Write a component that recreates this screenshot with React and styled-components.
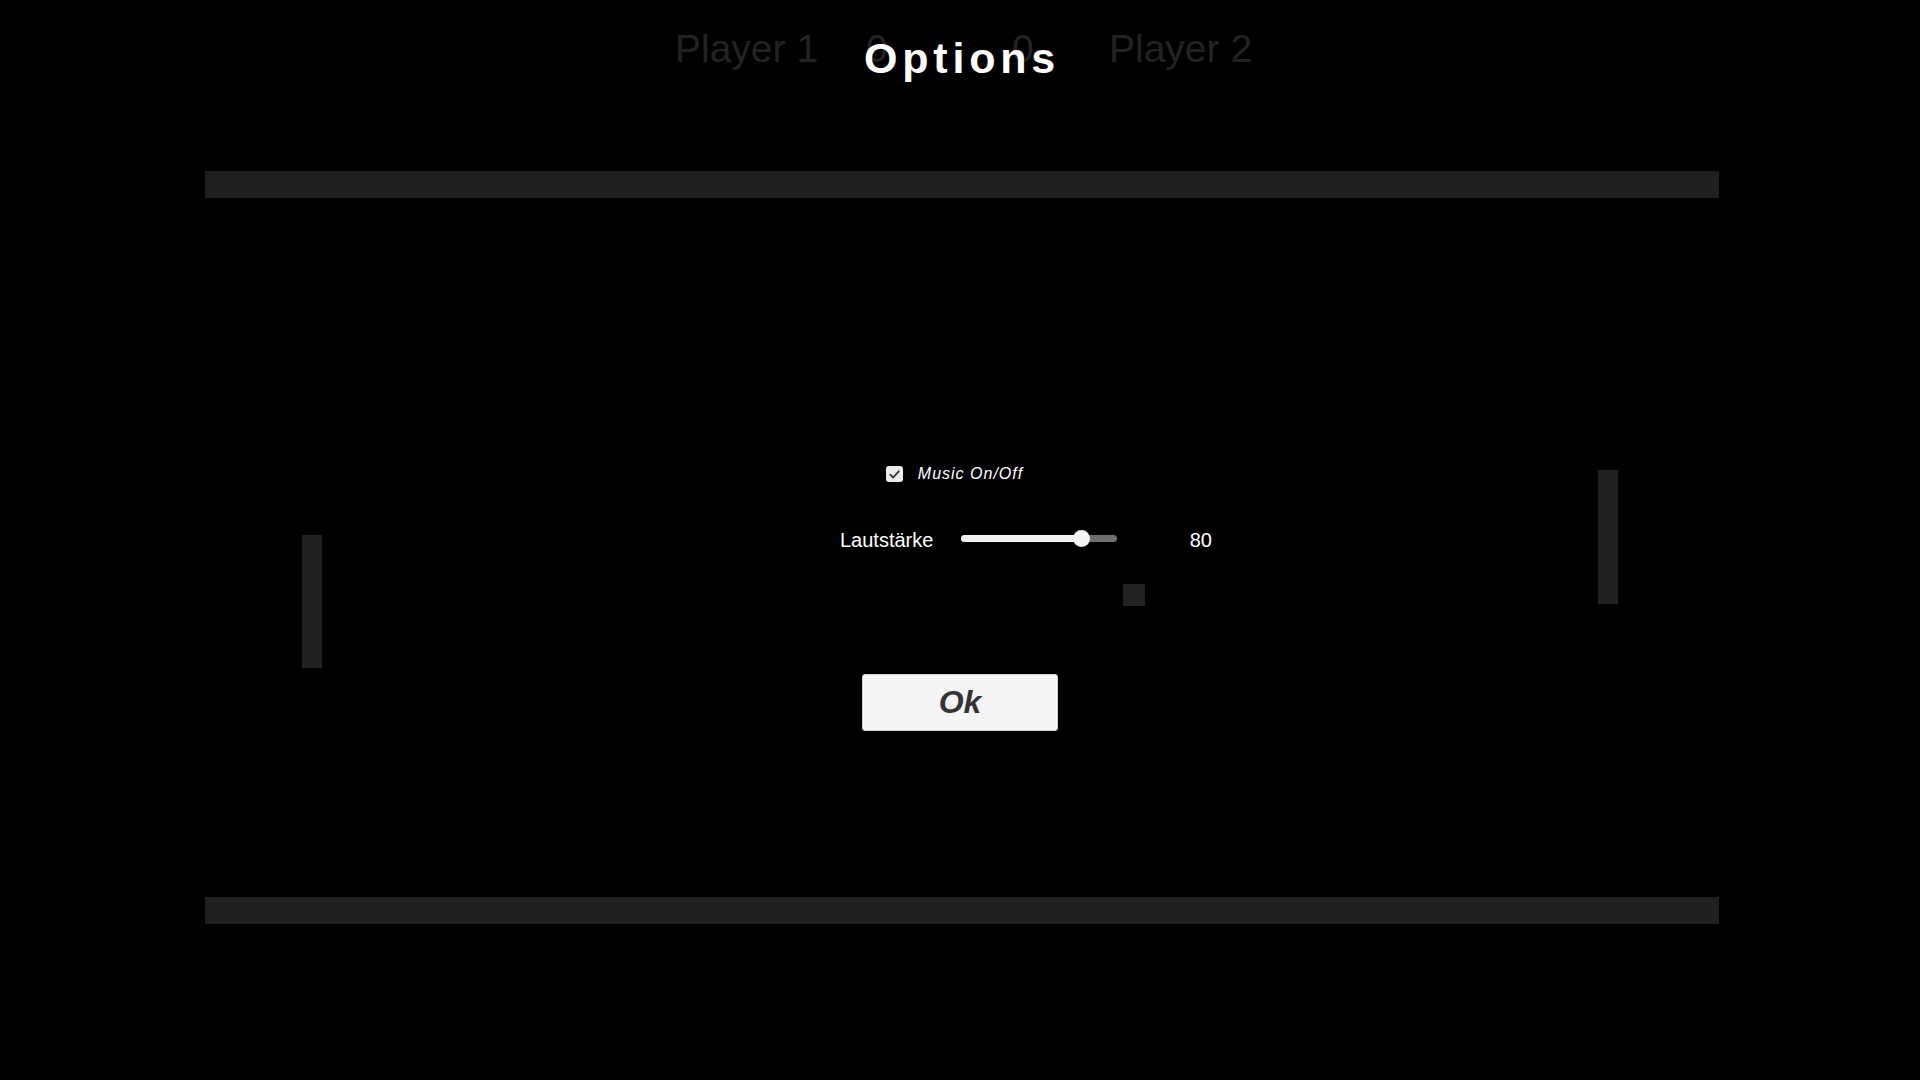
import React from 'react';
import styled, { createGlobalStyle } from 'styled-components';

const GlobalStyle = createGlobalStyle`
  html, body {
    margin: 0;
    padding: 0;
    background: #000;
  }
  body {
    font-family: "Liberation Sans", Arial, sans-serif;
  }
`

const Screen = styled.div`
  position: relative;
  width: 1920px;
  height: 1080px;
  background: #000;
  overflow: hidden;
`

const Scoreboard = styled.div`
  display: flex;
  padding-top: 29px;
  padding-left: 675px;
  height: 39px;
`

const ScoreText = styled.span`
  flex: none;
  width: ${p => p.w}px;
  margin-left: ${p => p.offset || 0}px;
  font-size: 39px;
  line-height: 39px;
  color: #232323;
  white-space: nowrap;
`

const Field = styled.div`
  position: relative;
  margin: 103px 0 0 205px;
  width: 1514px;
  height: 753px;
  display: flex;
  flex-direction: column;
  justify-content: space-between;
`

const Wall = styled.div`
  height: 27px;
  background: #1f1f1f;
`

// paddles and ball sit on the play field like game objects
const Paddle = styled.div`
  position: absolute;
  left: ${p => p.x}px;
  top: ${p => p.y}px;
  width: 20px;
  height: ${p => p.h}px;
  background: #212121;
`

const Ball = styled.div`
  position: absolute;
  left: 918px;
  top: 413px;
  width: 22px;
  height: 22px;
  background: #222;
`

const Overlay = styled.div`
  position: absolute;
  inset: 0;
  display: flex;
  flex-direction: column;
  align-items: center;
`

const Title = styled.h1`
  margin: 37px 0 0 0;
  font-size: 43px;
  line-height: 43px;
  font-weight: 700;
  letter-spacing: 4.8px;
  color: #fff;
  padding-left: 4px;
`

const CheckRow = styled.label`
  display: flex;
  align-items: center;
  height: 18px;
  margin-top: 385px;
  margin-right: 11px;
  gap: 15px;
  color: #fff;
  font-size: 16px;
  line-height: 18px;
  font-style: italic;
  letter-spacing: 1px;
`

const CheckBox = styled.span`
  width: 17px;
  height: 16px;
  border-radius: 3px;
  background: #ececec;
  display: flex;
  align-items: center;
  justify-content: center;
`

const SliderRow = styled.div`
  display: flex;
  align-items: center;
  height: 20px;
  margin-top: 45px;
  margin-left: 132px;
  width: 372px;
  color: #fff;
  font-size: 20px;
  line-height: 20px;
`

const SliderLabel = styled.span`
  width: 121px;
  padding-top: 3px;
`

const Track = styled.div`
  position: relative;
  width: 156px;
  height: 7px;
  border-radius: 4px;
  background: #6f6f6f;
`

const TrackFill = styled.div`
  height: 100%;
  border-radius: 4px;
  background: #f2f2f2;
`

const Knob = styled.div`
  position: absolute;
  top: 50%;
  width: 17px;
  height: 17px;
  margin: -8.5px 0 0 -8.5px;
  border-radius: 50%;
  background: #f5f5f5;
`

const SliderValue = styled.span`
  margin-left: auto;
  padding-top: 3px;
`

const OkButton = styled.button`
  margin-top: 126px;
  width: 196px;
  height: 57px;
  background: #f5f5f5;
  border: 1px solid #cfcfcf;
  border-radius: 3px;
  font-family: "Liberation Sans", Arial, sans-serif;
  font-size: 32px;
  font-weight: 700;
  font-style: italic;
  color: #333;
  padding: 0;
  cursor: pointer;
`

export default function App() {
  const volume = 80;
  const fillPct = 77;
  return (
    <Screen>
      <GlobalStyle />
      <Scoreboard>
        <ScoreText w={139}>Player 1</ScoreText>
        <ScoreText w={19} offset={52}>0</ScoreText>
        <ScoreText w={18} offset={127}>0</ScoreText>
        <ScoreText w={143} offset={79}>Player 2</ScoreText>
      </Scoreboard>
      <Field>
        <Wall />
        <Wall />
        <Paddle x={97} y={364} h={133} />
        <Paddle x={1393} y={299} h={134} />
        <Ball />
      </Field>
      <Overlay>
        <Title>Options</Title>
        <CheckRow>
          <CheckBox>
            <svg width="11" height="9" viewBox="0 0 11 9">
              <path d="M1.2 4.6 L4.2 7.5 L9.8 1.3" fill="none" stroke="#333" strokeWidth="1.8" strokeLinecap="round" strokeLinejoin="round" />
            </svg>
          </CheckBox>
          Music On/Off
        </CheckRow>
        <SliderRow>
          <SliderLabel>Lautstärke</SliderLabel>
          <Track>
            <TrackFill style={{ width: fillPct + '%' }} />
            <Knob style={{ left: fillPct + '%' }} />
          </Track>
          <SliderValue>{volume}</SliderValue>
        </SliderRow>
        <OkButton>Ok</OkButton>
      </Overlay>
    </Screen>
  );
}
